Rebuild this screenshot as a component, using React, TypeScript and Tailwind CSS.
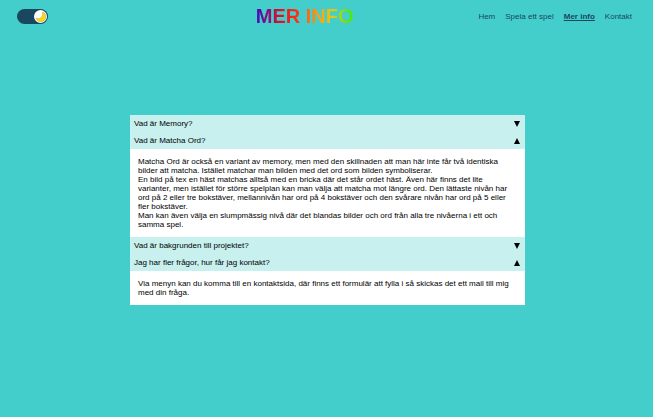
import { useState } from "react";

const links = ["Hem", "Spela ett spel", "Mer info", "Kontakt"];

const questions = [
  {
    title: "Vad är Memory?",
    open: false,
    text: ["Memory är ett spel där man ska hitta två likadana bilder."],
  },
  {
    title: "Vad är Matcha Ord?",
    open: true,
    text: [
      "Matcha Ord är också en variant av memory, men med den skillnaden att man här inte får två identiska bilder att matcha. Istället matchar man bilden med det ord som bilden symboliserar.",
      "En bild på tex en häst matchas alltså med en bricka där det står ordet häst. Även här finns det lite varianter, men istället för större spelplan kan man välja att matcha mot längre ord. Den lättaste nivån har ord på 2 eller tre bokstäver, mellannivån har ord på 4 bokstäver och den svårare nivån har ord på 5 eller fler bokstäver.",
      "Man kan även välja en slumpmässig nivå där det blandas bilder och ord från alla tre nivåerna i ett och samma spel.",
    ],
  },
  {
    title: "Vad är bakgrunden till projektet?",
    open: false,
    text: ["Projektet är ett skolarbete."],
  },
  {
    title: "Jag har fler frågor, hur får jag kontakt?",
    open: true,
    text: [
      "Via menyn kan du komma till en kontaktsida, där finns ett formulär att fylla i så skickas det ett mail till mig med din fråga.",
    ],
  },
];

function ThemeToggle() {
  const [night, setNight] = useState(true);
  return (
    <button
      type="button"
      role="switch"
      aria-checked={night}
      aria-label="Mörkt läge"
      onClick={() => setNight(!night)}
      className={`flex h-[15px] w-[31px] items-center rounded-full bg-[#1a4660] px-px ${night ? "justify-end" : "justify-start"}`}
    >
      <svg viewBox="0 0 26 26" className="size-[13px]" aria-hidden="true">
        <circle cx="13" cy="13" r="13" fill="#fff" />
        <path d="M17 4A10 10 0 1 1 4 16C9 20 20 15 17 4Z" fill="#f5d821" stroke="#c9a51c" strokeWidth="1" />
      </svg>
    </button>
  );
}

function Question({ title, open, text }: (typeof questions)[number]) {
  const [expanded, setExpanded] = useState(open);
  return (
    <section>
      <h2>
        <button
          type="button"
          aria-expanded={expanded}
          onClick={() => setExpanded(!expanded)}
          className="flex w-full items-center justify-between bg-[#c8f0ee] p-1 text-left leading-[9px]"
        >
          <span>{title}</span>
          <svg viewBox="0 0 8 8" className="size-2" aria-hidden="true">
            <path d={expanded ? "M4 1 7 7H1Z" : "M1 1H7L4 7Z"} fill="#000" />
          </svg>
        </button>
      </h2>
      {expanded && (
        <div className="bg-white p-2">
          {text.map((paragraph) => (
            <p key={paragraph}>{paragraph}</p>
          ))}
        </div>
      )}
    </section>
  );
}

export default function App() {
  return (
    <div className="min-h-screen bg-[#43cecb] font-['Liberation_Sans',Arial,sans-serif] text-[8px] leading-[9px] text-black">
      <header className="flex h-8 items-center justify-between pr-[21px] pl-[17px]">
        <div className="w-[114px]">
          <ThemeToggle />
        </div>
        <h1 className="bg-[linear-gradient(to_right,#3a0cc0,#e0102a_25%,#ff3a10_45%,#ff9a10_62%,#e8c810_78%,#30f010)] bg-clip-text text-[20px] leading-6 font-bold text-transparent">
          MER INFO
        </h1>
        <nav>
          <ul className="flex gap-2.5 text-[#1a4660]">
            {links.map((link) => (
              <li key={link}>
                <a href="#" className={link === "Mer info" ? "font-bold underline" : ""}>
                  {link}
                </a>
              </li>
            ))}
          </ul>
        </nav>
      </header>
      <main className="pt-[83px] pr-5 pl-[22px]">
        <div className="mx-auto w-full max-w-[395px]">
          {questions.map((question) => (
            <Question key={question.title} {...question} />
          ))}
        </div>
      </main>
    </div>
  );
}
